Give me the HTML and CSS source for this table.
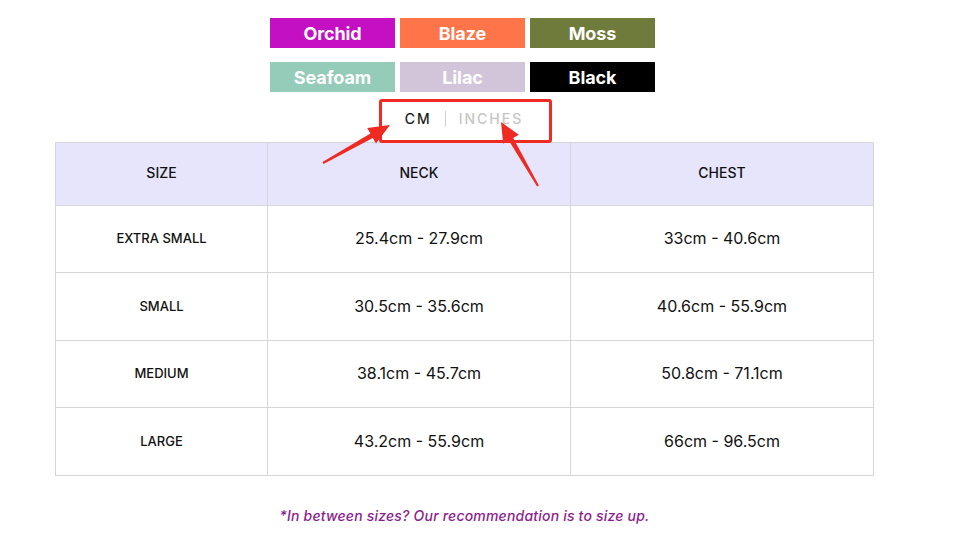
FILE: index.html
```html
<!DOCTYPE html>
<html lang="en">
<head>
<meta charset="utf-8">
<title>Size chart</title>
<link rel="stylesheet" href="styles.css">
</head>
<body>
<main class="page">
  <div class="swatches">
    <div class="swatch orchid">Orchid</div>
    <div class="swatch blaze">Blaze</div>
    <div class="swatch moss">Moss</div>
    <div class="swatch seafoam">Seafoam</div>
    <div class="swatch lilac">Lilac</div>
    <div class="swatch black">Black</div>
  </div>
  <div class="toggle">
    <span class="unit active">CM</span>
    <span class="sep"></span>
    <span class="unit">INCHES</span>
  </div>
  <table class="chart">
    <colgroup>
      <col class="c-size">
      <col class="c-val">
      <col class="c-val2">
    </colgroup>
    <thead>
      <tr><th>SIZE</th><th>NECK</th><th>CHEST</th></tr>
    </thead>
    <tbody>
      <tr class="r1"><td class="size">EXTRA SMALL</td><td>25.4cm - 27.9cm</td><td>33cm - 40.6cm</td></tr>
      <tr class="r2"><td class="size">SMALL</td><td>30.5cm - 35.6cm</td><td>40.6cm - 55.9cm</td></tr>
      <tr class="r1"><td class="size">MEDIUM</td><td>38.1cm - 45.7cm</td><td>50.8cm - 71.1cm</td></tr>
      <tr class="r2"><td class="size">LARGE</td><td>43.2cm - 55.9cm</td><td>66cm - 96.5cm</td></tr>
    </tbody>
  </table>
  <p class="note">*In between sizes? Our recommendation is to size up.</p>
</main>
<svg class="arrows" width="961" height="534" viewBox="0 0 961 534" aria-hidden="true">
  <polygon fill="#ee2a22" points="322.5,162.1 370.4,133.6 367.2,128 390,125 376,143.6 372.8,138 323.5,163.9"/>
  <polygon fill="#ee2a22" points="537.1,186.5 508.8,140.55 503.2,143.8 501,122 518.8,134.8 513.2,138.05 538.9,185.5"/>
</svg>
</body>
</html>
```
FILE: styles.css
```css
html, body {
  margin: 0;
  padding: 0;
  background: #ffffff;
}

body {
  font-family: Inter, "Open Sans", sans-serif;
  color: #111111;
  position: relative;
  width: 961px;
  height: 534px;
  overflow: hidden;
}

.page {
  margin-left: 55px;
  width: 819px;
  display: flex;
  flex-direction: column;
  align-items: flex-start;
  padding-top: 18px;
}

.swatches {
  display: grid;
  grid-template-columns: repeat(3, 125px);
  column-gap: 5px;
  row-gap: 14px;
  margin-left: 215px;
}

.swatch {
  height: 30px;
  display: flex;
  align-items: center;
  justify-content: center;
  color: #ffffff;
  font-weight: 700;
  font-size: 18px;
  letter-spacing: -0.1px;
}

.orchid { background: #c40fc3; }
.blaze { background: #ff7449; }
.moss { background: #6e7b3b; }
.seafoam { background: #94cbb9; }
.lilac { background: #d2c5da; }
.black { background: #000000; }

.toggle {
  position: relative;
  margin-top: 7px;
  margin-left: 324px;
  width: 173px;
  height: 43px;
  display: flex;
  align-items: center;
  justify-content: center;
  gap: 13px;
  padding-bottom: 4px;
  padding-right: 3px;
  box-sizing: border-box;
}

.toggle::after {
  content: "";
  position: absolute;
  left: 0;
  top: 0;
  right: 0;
  bottom: -1px;
  border: 3px solid #ee2a22;
  border-radius: 3px;
}

.unit {
  font-size: 14px;
  font-weight: 500;
  letter-spacing: 2px;
  color: #c6c6c6;
}

.unit.active {
  color: #111111;
  font-weight: 400;
  -webkit-text-stroke: 0.2px #111111;
}

.sep {
  width: 1px;
  height: 16px;
  background: #cfcfcf;
}

.chart {
  border-collapse: separate;
  border-spacing: 0;
  width: 819px;
  table-layout: fixed;
  border-top: 1px solid #d6d6d6;
  border-left: 1px solid #d6d6d6;
}

.c-size { width: 212px; }
.c-val { width: 303px; }
.c-val2 { width: 303px; }

.chart th,
.chart td {
  border-right: 1px solid #d6d6d6;
  border-bottom: 1px solid #d6d6d6;
  text-align: center;
  vertical-align: middle;
  padding: 0;
  box-sizing: border-box;
}

.chart th {
  background: #e7e5fc;
  height: 63px;
  padding-bottom: 3px;
  font-size: 14px;
  font-weight: 500;
  color: #111111;
}

.chart td {
  font-size: 16px;
  font-weight: 400;
  color: #111111;
  padding-bottom: 2px;
}

.r1 td { height: 67px; }
.r2 td { height: 68px; }

.chart td.size {
  font-size: 13px;
  font-weight: 500;
}

.note {
  align-self: center;
  margin: 31px 0 0 0;
  font-size: 14px;
  font-style: italic;
  font-weight: 500;
  letter-spacing: 0.2px;
  color: #8b1e8c;
}

.arrows {
  position: absolute;
  left: 0;
  top: 0;
  pointer-events: none;
}
```
